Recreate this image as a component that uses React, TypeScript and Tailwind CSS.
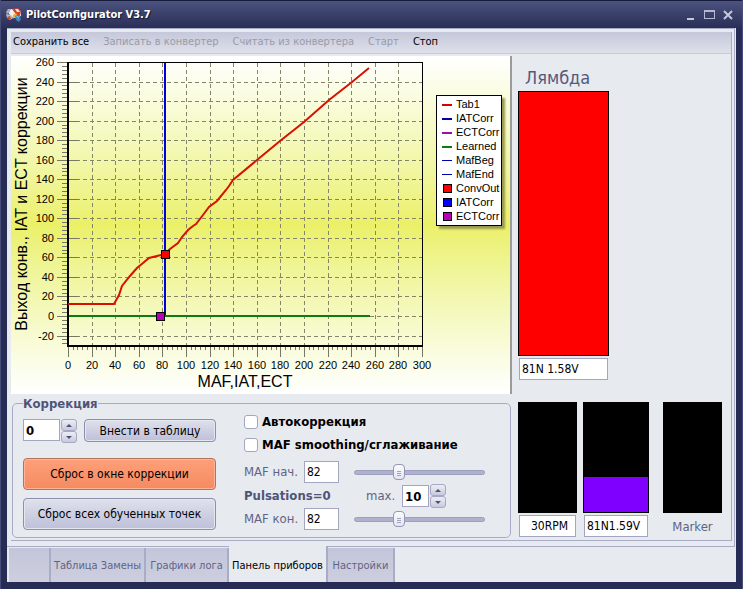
import { useState } from "react";

const menuItems = [
  { label: "Сохранить все", enabled: true },
  { label: "Записать в конвертер", enabled: false },
  { label: "Считать из конвертера", enabled: false },
  { label: "Старт", enabled: false },
  { label: "Стоп", enabled: true },
];

const tabs = ["", "Таблица Замены", "Графики лога", "Панель приборов", "Настройки"];
const tabWidths = ["w-[42px]", "w-[95px]", "w-[83px]", "w-[99px]", "w-[67px]"];

const series = [
  { label: "Tab1", kind: "thick", color: "#d80000" },
  { label: "IATCorr", kind: "thick", color: "#0000a8" },
  { label: "ECTCorr", kind: "thick", color: "#a010a0" },
  { label: "Learned", kind: "thick", color: "#107a10" },
  { label: "MafBeg", kind: "thin", color: "#0000a8" },
  { label: "MafEnd", kind: "thin", color: "#0000a8" },
  { label: "ConvOut", kind: "box", color: "#ff0000" },
  { label: "IATCorr", kind: "box", color: "#0000ff" },
  { label: "ECTCorr", kind: "box", color: "#b800b8" },
];

const px = (v: number) => Math.round(57 + (v * 354) / 300);
const py = (v: number) => Math.round(260 - (v * 254) / 260);
const xTicks = Array.from({ length: 16 }, (_, i) => i * 20);
const yTicks = Array.from({ length: 15 }, (_, i) => i * 20 - 20);
const xMinor = Array.from({ length: 76 }, (_, i) => i * 4);
const yMinor = Array.from({ length: 73 }, (_, i) => i * 4 - 28);

const curve =
  "57,248 103,248 108,239 111,230 119,220 126,212 132,207 138,202 146,200 154,198 159,193 167,187 171,181 177,174 182,170 185,168 192,159 198,151 206,145 215,134 218,130 222,124 246,104 269,85 293,66 318,44 341,26 358,12";

function Chart() {
  return (
    <svg className="h-[338px] w-[425px] shrink-0" viewBox="0 0 425 338" fontFamily="'Liberation Sans', Arial, sans-serif">
      <g stroke="#85856a" strokeDasharray="4 3" shapeRendering="crispEdges">
        {xTicks.slice(1, -1).map((v) => (
          <line key={v} x1={px(v) + 0.5} x2={px(v) + 0.5} y1="7" y2="289" />
        ))}
        {yTicks.slice(0, -1).map((v) => (
          <line key={v} x1="58" x2="411" y1={py(v) + 0.5} y2={py(v) + 0.5} />
        ))}
      </g>
      <g stroke="#777766" shapeRendering="crispEdges">
        {xMinor.map((v) => (
          <line key={v} x1={px(v) + 0.5} x2={px(v) + 0.5} y1="291" y2="294" />
        ))}
        {yMinor.map((v) => (
          <line key={v} x1="51" x2="56" y1={py(v) + 0.5} y2={py(v) + 0.5} />
        ))}
        {xTicks.map((v) => (
          <line key={v} x1={px(v) + 0.5} x2={px(v) + 0.5} y1="291" y2="301" />
        ))}
        {yTicks.map((v) => (
          <line key={v} x1="46" x2="67" y1={py(v) + 0.5} y2={py(v) + 0.5} />
        ))}
      </g>
      <g shapeRendering="crispEdges">
        <rect x="56" y="6" width="356" height="1" />
        <rect x="411" y="6" width="1" height="285" />
        <rect x="56" y="289" width="356" height="2" />
        <rect x="56" y="6" width="2" height="285" />
        <rect x="58" y="259" width="301" height="2" fill="#107a10" />
        <rect x="153" y="7" width="2" height="252" fill="#0000d8" />
      </g>
      <polyline points={curve} fill="none" stroke="#d81000" strokeWidth="2" />
      <g stroke="#000" shapeRendering="crispEdges">
        <rect x="150.500" y="194.500" width="8" height="8" fill="#ff0000" />
        <rect x="145.500" y="256.500" width="8" height="8" fill="#b800b8" />
      </g>
      <g fontSize="11">
        {yTicks.map((v) => (
          <text key={v} x="43" y={py(v) + 4} textAnchor="end">{v}</text>
        ))}
        {xTicks.map((v) => (
          <text key={v} x={px(v)} y="313" textAnchor="middle">{v}</text>
        ))}
      </g>
      <g fontSize="16">
        <text x="234" y="331" textAnchor="middle">MAF,IAT,ECT</text>
        <text transform="translate(16 148) rotate(-90)" textAnchor="middle">Выход конв., IAT и ECT коррекции</text>
      </g>
    </svg>
  );
}

function Legend() {
  return (
    <ul className="mt-[39px] h-[131px] w-[66px] shrink-0 border border-black bg-white py-px pl-[5px] font-['Liberation_Sans',Arial,sans-serif] text-[11px] leading-[14px] text-black shadow-[3px_3px_2px_#9a9a50]">
      {series.map((s, i) => (
        <li key={i} className="flex h-[14px] items-center gap-1">
          <svg className="h-[9px] w-[10px] shrink-0" viewBox="0 0 10 9" shapeRendering="crispEdges">
            {s.kind === "box" ? (
              <rect x="1.500" y="0.500" width="8" height="8" fill={s.color} stroke="#000" />
            ) : (
              <rect x="0" y="4" width="10" height={s.kind === "thick" ? 2 : 1} fill={s.color} />
            )}
          </svg>
          {s.label}
        </li>
      ))}
    </ul>
  );
}

function Spinner({ name, onStep }: { name: string; onStep: (d: number) => void }) {
  const button =
    "flex h-[12px] w-4 items-center justify-center rounded-[3px] border border-[#a6a8c4] bg-linear-to-b from-[#eceef5] to-[#c8cade]";
  return (
    <span className="ml-px flex flex-col">
      <button type="button" className={button} aria-label={`${name}: больше`} onClick={() => onStep(1)}>
        <svg className="h-[3px] w-[6px]" viewBox="0 0 6 3"><path d="M3 0 6 3H0z" fill="#4c5072" /></svg>
      </button>
      <button type="button" className={button} aria-label={`${name}: меньше`} onClick={() => onStep(-1)}>
        <svg className="h-[3px] w-[6px]" viewBox="0 0 6 3"><path d="M3 3 6 0H0z" fill="#4c5072" /></svg>
      </button>
    </span>
  );
}

const field = "h-[22px] min-w-0 border border-[#a3a6c0] bg-white px-[2px] text-black outline-none";
const pushButton =
  "rounded-[4px] border border-[#8b8eae] bg-linear-to-b from-[#dfe1ec] to-[#bdc0d8] text-[12px] text-black shadow-[inset_0_0_0_1px_#e4e6f0]";
const slider =
  "h-4 w-[131px] appearance-none bg-transparent [&::-webkit-slider-runnable-track]:h-[5px] [&::-webkit-slider-runnable-track]:rounded-[3px] [&::-webkit-slider-runnable-track]:border [&::-webkit-slider-runnable-track]:border-[#9c9fbe] [&::-webkit-slider-runnable-track]:bg-[#b0b2cd] [&::-webkit-slider-thumb]:-mt-[7px] [&::-webkit-slider-thumb]:h-4 [&::-webkit-slider-thumb]:w-3 [&::-webkit-slider-thumb]:appearance-none [&::-webkit-slider-thumb]:rounded-[4px] [&::-webkit-slider-thumb]:border [&::-webkit-slider-thumb]:border-[#9396b4] [&::-webkit-slider-thumb]:[background:linear-gradient(#a0a3be,#a0a3be)_center_6px/4px_1px_no-repeat,linear-gradient(#a0a3be,#a0a3be)_center_8px/4px_1px_no-repeat,linear-gradient(#a0a3be,#a0a3be)_center_10px/4px_1px_no-repeat,linear-gradient(#fbfbfd,#e4e6f0)]";
const checkbox = "h-[14px] w-[14px] appearance-none rounded-[3px] border border-[#a3a6c0] bg-white checked:bg-[#6b6f96]";

function Correction() {
  const [amount, setAmount] = useState(0);
  const [max, setMax] = useState(10);
  const [begin, setBegin] = useState(82);
  const [end, setEnd] = useState(82);
  return (
    <fieldset className="mx-px mt-px flex h-[143px] min-w-0 gap-7 rounded-[5px] border border-[#a9acc6] pl-[10px]">
      <legend className="ml-0 h-[17px] px-0 text-[13px] leading-[17px] font-bold text-[#4f5578]">Коррекция</legend>
      <div className="flex w-[193px] shrink-0 flex-col pt-[7px]">
        <div className="flex h-6">
          <input aria-label="Коррекция" className={`${field} w-[37px] text-[13px] font-bold`} value={amount} onChange={(e) => setAmount(Number(e.target.value) || 0)} />
          <Spinner name="Коррекция" onStep={(d) => setAmount(amount + d)} />
          <button type="button" className={`${pushButton} ml-[7px] h-[23px] flex-1`}>Внести в таблицу</button>
        </div>
        <button type="button" className="mt-[15px] h-8 rounded-[4px] border border-[#b5725a] bg-linear-to-b from-[#fda07a] to-[#f58a60] text-[12px] text-black shadow-[inset_0_0_0_1px_#ffb595]">
          Сброс в окне коррекции
        </button>
        <button type="button" className={`${pushButton} mt-2 h-8`}>Сброс всех обученных точек</button>
      </div>
      <div className="flex flex-col pt-[3px] text-[13px] text-[#5f6485]">
        <label className="flex h-[14px] items-center gap-1 font-bold text-black">
          <input type="checkbox" className={checkbox} />Автокоррекция
        </label>
        <label className="mt-[9px] flex h-[14px] items-center gap-1 font-bold text-black">
          <input type="checkbox" className={checkbox} />MAF smoothing/сглаживание
        </label>
        <div className="mt-[9px] flex h-[22px] items-center">
          <label htmlFor="maf-begin" className="w-[60px]">MAF нач.</label>
          <input id="maf-begin" className={`${field} w-[35px] text-[12px]`} value={begin} onChange={(e) => setBegin(Number(e.target.value) || 0)} />
          <input type="range" aria-label="MAF нач." min="0" max="255" value={begin} onChange={(e) => setBegin(Number(e.target.value))} className={`${slider} ml-[15px]`} />
        </div>
        <div className="mt-[2px] flex h-[22px] items-center">
          <span className="w-[122px] font-bold text-[#4f5578]">Pulsations=0</span>
          <label htmlFor="pulsation-max" className="w-9">max.</label>
          <input id="pulsation-max" className={`${field} w-[27px] font-bold`} value={max} onChange={(e) => setMax(Number(e.target.value) || 0)} />
          <Spinner name="max." onStep={(d) => setMax(max + d)} />
        </div>
        <div className="mt-px flex h-[22px] items-center">
          <label htmlFor="maf-end" className="w-[60px]">MAF кон.</label>
          <input id="maf-end" className={`${field} w-[35px] text-[12px]`} value={end} onChange={(e) => setEnd(Number(e.target.value) || 0)} />
          <input type="range" aria-label="MAF кон." min="0" max="255" value={end} onChange={(e) => setEnd(Number(e.target.value))} className={`${slider} ml-[15px]`} />
        </div>
      </div>
    </fieldset>
  );
}

function Gauges() {
  return (
    <aside className="flex w-[219px] shrink-0 flex-col pl-[6px] text-[12px]">
      <h2 className="mt-[9px] pl-[7px] text-[18px] leading-[26px] text-[#555a7c]">Лямбда</h2>
      <div className="h-[265px] w-[91px] border border-black bg-[#ff0000]" />
      <input readOnly aria-label="Лямбда" className={`${field} mt-[2px] ml-px w-[89px]`} value="81N 1.58V" />
      <div className="mt-[22px] flex">
        <div className="flex w-[59px] flex-col">
          <div className="h-[111px] bg-black" />
          <input readOnly aria-label="Обороты" className={`${field} mx-px mt-[2px] pr-[7px] text-right`} value="30RPM" />
        </div>
        <div className="ml-[6px] flex w-[66px] flex-col">
          <div className="flex h-[111px] flex-col justify-end bg-black p-px">
            <div className="h-[35px] bg-[#8000ff]" />
          </div>
          <input readOnly aria-label="Напряжение" className={`${field} mx-px mt-[2px]`} value="81N1.59V" />
        </div>
        <div className="ml-[14px] flex w-[59px] flex-col text-[13px] text-[#5f6485]">
          <div className="h-[111px] bg-black" />
          <span className="mt-[5px] text-center leading-[18px]">Marker</span>
        </div>
      </div>
    </aside>
  );
}

export default function App() {
  const [active, setActive] = useState(3);
  return (
    <div className="flex min-h-screen flex-col border-x border-[#474d7a] bg-[#272c55] font-['DejaVu_Sans_Condensed','DejaVu_Sans',Tahoma,sans-serif]">
      <header className="flex h-7 shrink-0 items-center border-t border-[#171c3c] bg-linear-to-b from-[#4b5380] via-[#3a4069] to-[#2a2f58] pr-[9px] pl-[5px] text-white">
        <svg className="h-[14px] w-4 shrink-0" viewBox="0 0 16 14">
          <path d="M2 4 5 1h6l4 2v5l-5 2-5-1z" fill="#f2efea" />
          <path d="M0 4 2 1l3 0-2 4-2 1z" fill="#a9adbd" />
          <path d="M6 1 12 0l3 3-1 5-3 1-2-4z" fill="#d8402c" />
          <path d="M9 1h3l2 3-3 0z" fill="#efe2dc" />
          <path d="M0 6 5 7l2 3-3 2-3-2z" fill="#b9bcc8" />
          <path d="m1 9 3-1 1 3-2 1z" fill="#c84a30" />
          <path d="m7 7 3-2 1 2-4 4z" fill="#e4b23c" />
          <path d="m9 8 3-1 3 4-2 3-3-2z" fill="#3a86c4" />
          <path d="m10 8 2 0 1 3z" fill="#6fd0c8" />
        </svg>
        <h1 className="ml-1 flex-1 text-[11px] leading-4 font-bold [text-shadow:1px_1px_1px_#11152f]">PilotConfigurator V3.7</h1>
        <div className="flex h-full items-center gap-[8px]">
          <button type="button" aria-label="Свернуть">
            <svg className="h-3 w-[9px]" viewBox="0 0 9 12"><path d="M1 9h7v2H1z" fill="#c4c8de" /></svg>
          </button>
          <button type="button" aria-label="Развернуть">
            <svg className="h-3 w-3" viewBox="0 0 12 12" shapeRendering="crispEdges"><path d="M1 1h11v2H1zM1 3h1v7H1zM11 3h1v7h-1zM1 9h11v1H1z" fill="#b4b8d2" /></svg>
          </button>
          <button type="button" aria-label="Закрыть">
            <svg className="h-3 w-[10px]" viewBox="0 0 10 12"><path d="m1 2 8 8M9 2l-8 8" fill="none" stroke="#c4c8de" strokeWidth="2" /></svg>
          </button>
        </div>
      </header>
      <div className="mx-[6px] mb-[7px] flex grow flex-col bg-[#e7eaef] pr-px">
        <div className="border-t border-r border-b border-[#a9acc6] pt-[3px] pr-[2px] pb-[5px] pl-1">
          <div className="border-r border-b border-[#a9acc6]">
            <nav className="flex h-[22px] gap-[14px] border-b border-[#c6c9d8] bg-linear-to-b from-[#c5c8da] to-[#dee0ea] pl-[2px] text-[11px]">
              {menuItems.map((m) => (
                <button key={m.label} type="button" disabled={!m.enabled} className="h-5 whitespace-nowrap text-black disabled:text-[#999baa]">
                  {m.label}
                </button>
              ))}
            </nav>
            <main className="flex pt-[2px] pb-[2px]">
              <div className="min-w-0 flex-1">
                <section aria-label="График" className="flex border-r-2 border-[#9b9b9b] bg-linear-to-b from-white via-[#ebf068] to-white">
                  <Chart />
                  <Legend />
                </section>
                <Correction />
              </div>
              <Gauges />
            </main>
          </div>
        </div>
        <div role="tablist" className="flex h-[35px] pl-[2px] text-[11px]">
          {tabs.map((t, i) => (
            <button
              key={i}
              type="button"
              role="tab"
              aria-label={t || "Пустая вкладка"}
              aria-selected={i === active}
              onClick={() => setActive(i)}
              className={`${tabWidths[i]} shrink-0 whitespace-nowrap border-r-2 ${
                i === active
                  ? "relative -mt-px border-[#a9acc6] bg-[#e7eaef] pt-[5px] text-black"
                  : "mt-px border-[#a9acc6] bg-linear-to-b from-[#c3c5d9] to-[#cdcfe0] pt-[2px] text-[#5f6485]"
              }`}
            >
              {t}
            </button>
          ))}
        </div>
      </div>
    </div>
  );
}
